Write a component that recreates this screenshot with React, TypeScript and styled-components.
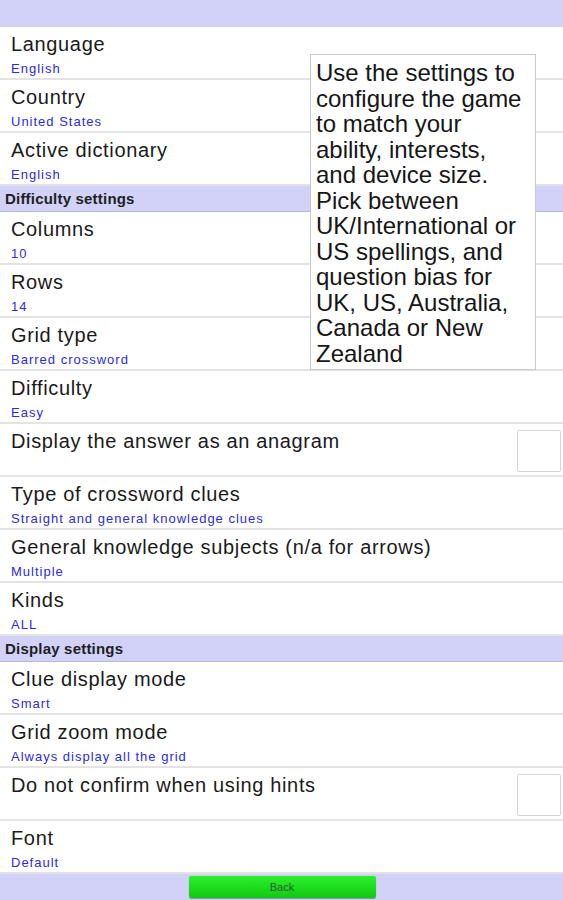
import React from "react";
import styled, { createGlobalStyle } from "styled-components";

const GlobalStyle = createGlobalStyle`
  html, body {
    margin: 0;
    padding: 0;
    background: #ffffff;
  }
  body {
    font-family: "Liberation Sans", Arial, sans-serif;
  }
`;

const Page = styled.div`
  position: relative;
  width: 563px;
  height: 900px;
  display: flex;
  flex-direction: column;
  overflow: hidden;
  background: #ffffff;
`;

const TopBar = styled.div`
  height: 27px;
  flex: none;
  background: #d2d2f9;
`;

const List = styled.div`
  flex: 1;
  overflow: hidden;
  display: flex;
  flex-direction: column;
`;

const SectionHeader = styled.div`
  flex: none;
  height: 25px;
  line-height: 26px;
  padding-left: 5px;
  background: #d2d2f9;
  border-bottom: 1px solid #b9b9d6;
  color: #1e1e1e;
  font-size: 15px;
  font-weight: bold;
  letter-spacing: 0.2px;
`;

const Row = styled.div`
  flex: none;
  height: 45px;
  padding: 6px 2px 0 11px;
  border-bottom: 2px solid #e3e3e3;
  display: flex;
  justify-content: space-between;
  align-items: flex-start;
`;

const Texts = styled.div`
  display: flex;
  flex-direction: column;
`;

const Label = styled.div`
  font-size: 20px;
  line-height: 23px;
  letter-spacing: 0.65px;
  color: #1a1a1a;
`;

const Value = styled.div`
  margin-top: 5px;
  font-size: 13px;
  line-height: 15px;
  letter-spacing: 1px;
  color: #2b2bdc;
`;

const CheckBox = styled.div`
  width: 42px;
  height: 40px;
  border: 1px solid #d4d4d4;
  border-radius: 2px;
  background: #ffffff;
`;

const BottomBar = styled.div`
  flex: none;
  height: 26px;
  background: #d2d2f9;
  display: flex;
  justify-content: center;
  align-items: center;
`;

const BackButton = styled.button`
  width: 187px;
  height: 22px;
  margin-left: 1px;
  border: none;
  border-radius: 2px;
  background: linear-gradient(#2cf02c, #12c812);
  box-shadow: 0 1px 1px rgba(0, 80, 0, 0.4);
  color: #2f5a2f;
  font-family: "Liberation Sans", Arial, sans-serif;
  font-size: 11px;
  padding: 0;
`;

const Tooltip = styled.div`
  position: absolute;
  left: 310px;
  top: 54px;
  width: 226px;
  height: 316px;
  box-sizing: border-box;
  padding: 5px 0 0 5px;
  background: #ffffff;
  border: 1px solid #c8c8c8;
  font-size: 24px;
  line-height: 25.5px;
  color: #161616;
`;

const TipLine = styled.div`
  white-space: nowrap;
`;

type Item =
  | { kind: "header"; title: string }
  | { kind: "row"; label: string; value?: string; check?: boolean };

const items: Item[] = [
  { kind: "row", label: "Language", value: "English" },
  { kind: "row", label: "Country", value: "United States" },
  { kind: "row", label: "Active dictionary", value: "English" },
  { kind: "header", title: "Difficulty settings" },
  { kind: "row", label: "Columns", value: "10" },
  { kind: "row", label: "Rows", value: "14" },
  { kind: "row", label: "Grid type", value: "Barred crossword" },
  { kind: "row", label: "Difficulty", value: "Easy" },
  { kind: "row", label: "Display the answer as an anagram", check: true },
  { kind: "row", label: "Type of crossword clues", value: "Straight and general knowledge clues" },
  { kind: "row", label: "General knowledge subjects (n/a for arrows)", value: "Multiple" },
  { kind: "row", label: "Kinds", value: "ALL" },
  { kind: "header", title: "Display settings" },
  { kind: "row", label: "Clue display mode", value: "Smart" },
  { kind: "row", label: "Grid zoom mode", value: "Always display all the grid" },
  { kind: "row", label: "Do not confirm when using hints", check: true },
  { kind: "row", label: "Font", value: "Default" },
];

const tipLines = [
  "Use the settings to",
  "configure the game",
  "to match your",
  "ability, interests,",
  "and device size.",
  "Pick between",
  "UK/International or",
  "US spellings, and",
  "question bias for",
  "UK, US, Australia,",
  "Canada or New",
  "Zealand",
];

const App = () => {
  return (
    <>
      <GlobalStyle />
      <Page>
        <TopBar />
        <List>
          {items.map((it, i) =>
            it.kind === "header" ? (
              <SectionHeader key={i}>{it.title}</SectionHeader>
            ) : (
              <Row key={i}>
                <Texts>
                  <Label>{it.label}</Label>
                  {it.value && <Value>{it.value}</Value>}
                </Texts>
                {it.check && <CheckBox />}
              </Row>
            )
          )}
        </List>
        <BottomBar>
          <BackButton>Back</BackButton>
        </BottomBar>
        <Tooltip>
          {tipLines.map((l, i) => (
            <TipLine key={i}>{l}</TipLine>
          ))}
        </Tooltip>
      </Page>
    </>
  );
};

export default App;
